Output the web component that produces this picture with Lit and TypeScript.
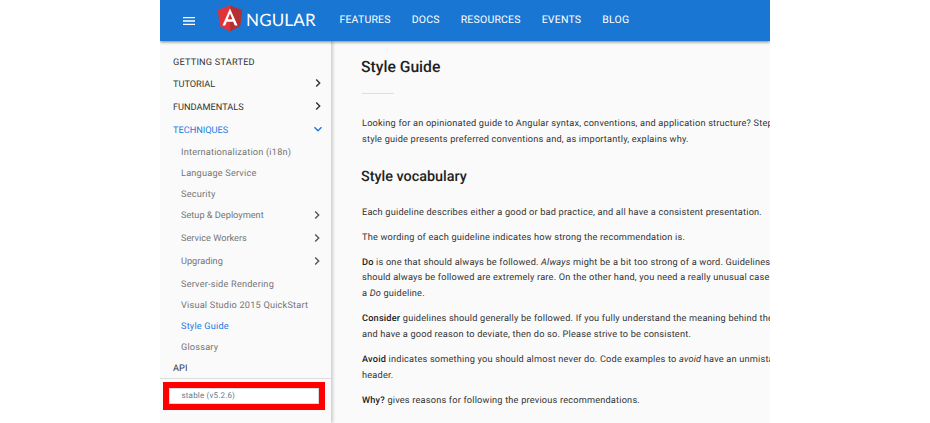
import { LitElement, html, css } from "lit";
import { customElement, property } from "lit/decorators.js";
import { classMap } from "lit/directives/class-map.js";

interface NavItem {
  label: string;
  level?: number;
  toggle?: "closed" | "open";
  active?: boolean;
  spacing: number;
}

const NAV: NavItem[] = [
  { label: "GETTING STARTED", spacing: 0.2 },
  { label: "TUTORIAL", toggle: "closed", spacing: 0 },
  { label: "FUNDAMENTALS", toggle: "closed", spacing: 0 },
  { label: "TECHNIQUES", toggle: "open", active: true, spacing: 0 },
  { label: "Internationalization (i18n)", level: 2, spacing: 0.19 },
  { label: "Language Service", level: 2, spacing: 0.19 },
  { label: "Security", level: 2, spacing: 0.19 },
  { label: "Setup & Deployment", level: 2, toggle: "closed", spacing: 0 },
  { label: "Service Workers", level: 2, toggle: "closed", spacing: 0 },
  { label: "Upgrading", level: 2, toggle: "closed", spacing: 0 },
  { label: "Server-side Rendering", level: 2, spacing: 0.19 },
  { label: "Visual Studio 2015 QuickStart", level: 2, spacing: 0.19 },
  { label: "Style Guide", level: 2, active: true, spacing: 0.19 },
  { label: "Glossary", level: 2, spacing: 0.19 },
  { label: "API", spacing: 0.1 },
];

@customElement("top-bar")
export class TopBar extends LitElement {
  static styles = css`
    :host {
      display: flex;
      align-items: flex-start;
      height: 41px;
      background: #1976d2;
      box-shadow: 0 1px 3px rgba(0, 0, 0, 0.5);
      position: relative;
      color: #fff;
      box-sizing: border-box;
      padding-left: 23px;
    }
    .menu { width: 12px; height: 8px; margin-top: 17px; }
    .shield { width: 26px; height: 27px; margin: 5px 0 0 22px; }
    .word {
      font: 17px/24px Lato, sans-serif;
      letter-spacing: 0.15px;
      margin: 8px 0 0 3px;
      width: 93px;
      white-space: nowrap;
    }
    nav {
      display: flex;
      gap: 21px;
      font: 10.5px/14px Roboto, sans-serif;
      letter-spacing: 0.2px;
      margin: 13px 0 0 0.4px;
      white-space: nowrap;
    }
  `;
  render() {
    return html`
      <svg class="menu" viewBox="0 0 12 8">
        <path d="M0 .7h12M0 4h12M0 7.3h12" stroke="#fff" stroke-width="1.3" />
      </svg>
      <svg class="shield" viewBox="0 0 250 260">
        <path fill="#b52e31" d="M125 5v251l99-54 18-155z" />
        <path fill="#e23237" d="M125 5 8 47l18 155 99 54z" />
        <path fill="#fff" d="M125 34 52 198h27l15-37h62l15 37h27zm0 48 22 56h-44z" />
      </svg>
      <span class="word">NGULAR</span>
      <nav>
        <span>FEATURES</span><span>DOCS</span><span>RESOURCES</span><span>EVENTS</span><span>BLOG</span>
      </nav>
    `;
  }
}

@customElement("side-nav")
export class SideNav extends LitElement {
  @property({ attribute: false }) items: NavItem[] = [];
  static styles = css`
    :host {
      display: block;
      width: 171px;
      flex: none;
      box-sizing: border-box;
      padding-top: 10px;
      background: #fafafa;
      box-shadow: 2px 0 3px rgba(0, 0, 0, 0.18);
      font: 9.2px/21px Roboto, sans-serif;
      color: #333;
    }
    .row {
      display: flex;
      justify-content: space-between;
      align-items: center;
      height: 21px;
      padding: 0 9px 0 13px;
      white-space: nowrap;
    }
    .row span { padding-top: 2px; }
    .row.toggle { height: 23px; }
    .row.toggle span { padding-top: 1px; }
    .row.toggle.level2 span { padding: 0 0 1px; }
    .level2 { padding: 0 10px 0 21px; color: #757575; }
    .row.active { color: #1a79de; }
    .chev { width: 8px; height: 8px; margin-top: -1px; fill: none; stroke: #333; stroke-width: 1.4; }
    .level2 .chev { stroke: #555; }
    .open .chev { transform: rotate(90deg); stroke: #1a79de; }
    .foot { border-top: 1px solid #dcdcdc; padding: 3px 0 0 3px; }
    .mark {
      box-sizing: border-box;
      width: 162px;
      height: 28px;
      border: 6px solid #f00;
      background: #fff;
    }
    .version {
      box-sizing: border-box;
      height: 16px;
      border: 1px solid #d5dadd;
      padding-left: 11.5px;
      font-size: 8px;
      line-height: 13px;
      letter-spacing: 0.18px;
      color: #607d8b;
    }
  `;
  render() {
    return html`
      ${this.items.map(
        (i) => html`<div
          class=${classMap({
            row: true,
            toggle: !!i.toggle,
            open: i.toggle === "open",
            level2: i.level === 2,
            active: !!i.active,
          })}
        >
          <span style="letter-spacing:${i.spacing}px">${i.label}</span>
          ${i.toggle
            ? html`<svg class="chev" viewBox="0 0 8 8"><path d="M2.2.5 5.7 4 2.2 7.5" /></svg>`
            : ""}
        </div>`
      )}
      <div class="foot"><div class="mark"><div class="version">stable (v5.2.6)</div></div></div>
    `;
  }
}

@customElement("app-root")
export class AppRoot extends LitElement {
  static styles = css`
    :host { display: block; height: 423px; background: #fff; overflow: hidden; text-rendering: geometricPrecision; }
    .window {
      display: flex;
      flex-direction: column;
      width: 610px;
      height: 423px;
      margin-left: 160px;
      overflow: hidden;
      background: #fafafa;
    }
    top-bar { flex: none; z-index: 1; }
    .body { display: flex; flex: 1; min-height: 0; }
    main {
      flex: 1;
      min-width: 0;
      overflow: hidden;
      padding: 16px 0 0 31px;
      font: 9.2px/15.77px Roboto, sans-serif;
      letter-spacing: 0.195px;
      color: #333;
      white-space: nowrap;
    }
    side-nav { position: relative; }
    h1, h2 { margin: 0 0 0 -1px; font-weight: 500; color: #222; line-height: 20px; }
    h1 { font-size: 15.7px; letter-spacing: 0; }
    h2 { font-size: 14.4px; letter-spacing: 0; margin-top: 19px; margin-bottom: 18.2px; }
    hr { width: 32px; height: 1px; border: 0; background: #dedede; margin: 16px 0 22px; }
    p { margin: 0 0 9.2px; }
    strong { font-weight: 500; color: #222; }
  `;
  render() {
    return html`
      <div class="window">
        <top-bar></top-bar>
        <div class="body">
          <side-nav .items=${NAV}></side-nav>
          <main>
            <h1>Style Guide</h1>
            <hr />
            <p>Looking for an opinionated guide to Angular syntax, conventions, and application structure? Step<br />style guide presents preferred conventions and, as importantly, explains why.</p>
            <h2>Style vocabulary</h2>
            <p>Each guideline describes either a good or bad practice, and all have a consistent presentation.</p>
            <p>The wording of each guideline indicates how strong the recommendation is.</p>
            <p><strong>Do</strong> is one that should always be followed. <em>Always</em> might be a bit too strong of a word. Guidelines<br />should always be followed are extremely rare. On the other hand, you need a really unusual case<br />a <em>Do</em> guideline.</p>
            <p><strong>Consider</strong> guidelines should generally be followed. If you fully understand the meaning behind the<br />and have a good reason to deviate, then do so. Please strive to be consistent.</p>
            <p><strong>Avoid</strong> indicates something you should almost never do. Code examples to <em>avoid</em> have an unmista<br />header.</p>
            <p><strong>Why?</strong> gives reasons for following the previous recommendations.</p>
          </main>
        </div>
      </div>
    `;
  }
}
